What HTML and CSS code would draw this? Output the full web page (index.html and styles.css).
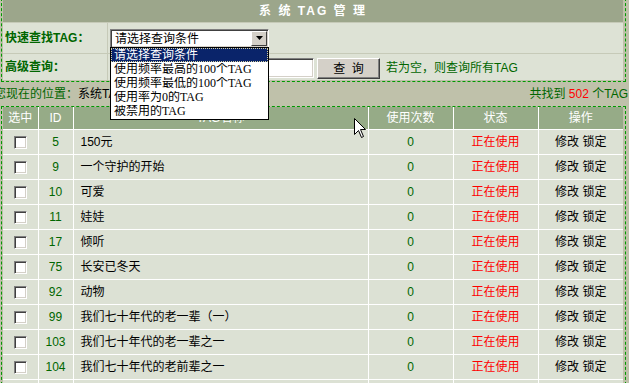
FILE: index.html
```html
<!DOCTYPE html>
<html lang="zh-CN">

<head>
    <meta charset="UTF-8">
    <title>系统TAG管理</title>
    <link rel="stylesheet" href="styles.css">
</head>

<body>
    <div class="panel search-panel">
        <div class="search">
            <div class="title">系 统 TAG 管 理</div>

            <div class="label">快速查找TAG：</div>
            <div class="field">
                <div class="select">
                    <span class="select-text">请选择查询条件</span>
                    <span class="select-btn">
                        <svg width="7" height="4" viewBox="0 0 7 4"><path d="M0 0h7L3.5 4z" fill="#000"/></svg>
                    </span>
                    <ul class="options">
                        <li class="active">请选择查询条件</li>
                        <li>使用频率最高的100个TAG</li>
                        <li>使用频率最低的100个TAG</li>
                        <li>使用率为0的TAG</li>
                        <li>被禁用的TAG</li>
                    </ul>
                </div>
            </div>

            <div class="label">高级查询：</div>
            <div class="field field-low">
                <span class="text-input"></span>
                <span class="btn">查 询</span>
                <span class="hint">若为空，则查询所有TAG</span>
            </div>
        </div>
    </div>

    <div class="location">
        <span class="here"><span class="green">您现在的位置：</span>系统TAG管理</span>
        <span class="found">共找到 <em>502</em> 个TAG</span>
    </div>

    <div class="panel list-panel">
        <table>
            <colgroup>
                <col class="c-check">
                <col class="c-id">
                <col class="c-name">
                <col class="c-num">
                <col class="c-state">
                <col class="c-op">
            </colgroup>
            <thead>
                <tr>
                    <th>选中</th>
                    <th>ID</th>
                    <th>TAG名称</th>
                    <th>使用次数</th>
                    <th>状态</th>
                    <th>操作</th>
                </tr>
            </thead>
            <tbody>
                <tr><td><span class="cb"></span></td><td class="num">5</td><td class="name">150元</td><td class="num">0</td><td class="state">正在使用</td><td>修改 锁定</td></tr>
                <tr><td><span class="cb"></span></td><td class="num">9</td><td class="name">一个守护的开始</td><td class="num">0</td><td class="state">正在使用</td><td>修改 锁定</td></tr>
                <tr><td><span class="cb"></span></td><td class="num">10</td><td class="name">可爱</td><td class="num">0</td><td class="state">正在使用</td><td>修改 锁定</td></tr>
                <tr><td><span class="cb"></span></td><td class="num">11</td><td class="name">娃娃</td><td class="num">0</td><td class="state">正在使用</td><td>修改 锁定</td></tr>
                <tr><td><span class="cb"></span></td><td class="num">17</td><td class="name">倾听</td><td class="num">0</td><td class="state">正在使用</td><td>修改 锁定</td></tr>
                <tr><td><span class="cb"></span></td><td class="num">75</td><td class="name">长安已冬天</td><td class="num">0</td><td class="state">正在使用</td><td>修改 锁定</td></tr>
                <tr><td><span class="cb"></span></td><td class="num">92</td><td class="name">动物</td><td class="num">0</td><td class="state">正在使用</td><td>修改 锁定</td></tr>
                <tr><td><span class="cb"></span></td><td class="num">99</td><td class="name">我们七十年代的老一辈（一）</td><td class="num">0</td><td class="state">正在使用</td><td>修改 锁定</td></tr>
                <tr><td><span class="cb"></span></td><td class="num">103</td><td class="name">我们七十年代的老一辈之一</td><td class="num">0</td><td class="state">正在使用</td><td>修改 锁定</td></tr>
                <tr><td><span class="cb"></span></td><td class="num">104</td><td class="name">我们七十年代的老前辈之一</td><td class="num">0</td><td class="state">正在使用</td><td>修改 锁定</td></tr>
                <tr><td></td><td></td><td></td><td></td><td></td><td></td></tr>
            </tbody>
        </table>
    </div>

    <!-- mouse pointer caught in the screenshot -->
    <svg class="cursor" width="13" height="21" viewBox="0 0 13 21">
        <path d="M0.5 0.5V16.5L4.5 12.5L7.5 19.5L9.5 18.5L6.5 11.5H11.5Z" fill="#fff" stroke="#000" stroke-width="1"/>
    </svg>
</body>

</html>
```

FILE: styles.css
```css
body {
    margin: 0;
    background: #bfc1aa;
    font-family: "Liberation Sans", "Noto Sans CJK SC", sans-serif;
    font-size: 12px;
    line-height: 14px;
    overflow: hidden;
    position: relative;
}

.panel {
    margin: 0 3px 0 1px;
    border: 1px dashed #009900;
}

.search-panel {
    margin-top: -2px;
    padding: 1px 2px 1px 1px;
}

.search {
    display: grid;
    grid-template-columns: 104px 1fr;
    grid-template-rows: 22px 30px 26px;
    gap: 1px;
    background: #c6cab8;
}

.title {
    grid-column: 1 / -1;
    background: #9ca68b;
    color: #fff;
    font-weight: bold;
    text-align: center;
    line-height: 22px;
    letter-spacing: 2px;
}

.label {
    display: flex;
    align-items: center;
    padding-left: 2px;
    background: #dde2d5;
    color: #006600;
    font-weight: bold;
}

.field {
    display: flex;
    align-items: center;
    padding-left: 2px;
    background: #dde2d5;
}

.field-low {
    padding-top: 2px;
}

.select {
    position: relative;
    width: 159px;
    height: 19px;
    box-sizing: border-box;
    display: flex;
    align-items: center;
    justify-content: space-between;
    background: #fff;
    border-top: 1px solid #808080;
    border-left: 1px solid #808080;
    border-right: 1px solid #fff;
    border-bottom: 1px solid #fff;
    box-shadow: inset 1px 1px #404040, inset -1px -1px #d4d0c8;
    z-index: 2;
}

.select-text {
    padding-left: 4px;
    font-family: "Noto Sans CJK SC", sans-serif;
}

.select-btn {
    width: 16px;
    height: 15px;
    margin-right: 1px;
    box-sizing: border-box;
    display: flex;
    align-items: center;
    justify-content: center;
    background: #d4d0c8;
    border-top: 1px solid #fff;
    border-left: 1px solid #fff;
    border-right: 1px solid #404040;
    border-bottom: 1px solid #404040;
}

.options {
    position: absolute;
    top: 100%;
    left: -1px;
    width: 159px;
    box-sizing: border-box;
    margin: 0;
    padding: 0 0 1px;
    list-style: none;
    background: #fff;
    border: 1px solid #000;
    font-family: "Liberation Serif", "Noto Sans CJK SC", serif;
    font-size: 12px;
    line-height: 12px;
}

.options li {
    height: 12px;
    padding-left: 2px;
    border: 1px solid transparent;
    overflow: hidden;
    white-space: nowrap;
}

.options .active {
    background: #0a246a;
    color: #fff;
    border: 1px dotted #d4d0a0;
}

.text-input {
    width: 204px;
    height: 20px;
    box-sizing: border-box;
    background: #fff;
    border-top: 1px solid #808080;
    border-left: 1px solid #808080;
    border-right: 1px solid #fff;
    border-bottom: 1px solid #fff;
    box-shadow: inset 1px 1px #404040, inset -1px -1px #d4d0c8;
}

.btn {
    margin-left: 3px;
    width: 63px;
    height: 21px;
    box-sizing: border-box;
    display: flex;
    align-items: center;
    justify-content: center;
    background: #d4d0c8;
    border-top: 1px solid #fff;
    border-left: 1px solid #fff;
    border-right: 1px solid #404040;
    border-bottom: 1px solid #404040;
    box-shadow: inset -1px -1px #808080;
    font-family: "Noto Sans CJK SC", sans-serif;
    word-spacing: 4px;
}

.hint {
    margin-left: 6px;
    color: #006600;
}

.location {
    height: 24px;
    padding-right: 1px;
    display: flex;
    align-items: center;
    justify-content: space-between;
    white-space: nowrap;
}

.here {
    margin-left: -6px;
    color: #000;
}

.green {
    color: #006600;
}

.found {
    color: #006600;
}

.found em {
    font-style: normal;
    color: #ff0000;
}

.list-panel {
    padding: 0 2px 0 1px;
}

table {
    width: 620px;
    table-layout: fixed;
    border-collapse: collapse;
    border-style: hidden;
}

.c-check,
.c-id {
    width: 35px;
}

.c-name {
    width: 295px;
}

.c-num,
.c-state,
.c-op {
    width: 85px;
}

th,
td {
    padding: 0;
    border: 1px solid #fff;
    text-align: center;
}

th {
    height: 22px;
    background: #96ab87;
    color: #fff;
    font-weight: normal;
}

td {
    height: 24px;
    background: #dce1d4;
    color: #000;
}

td.num {
    color: #006600;
}

td.name {
    text-align: left;
    padding-left: 7px;
}

td.state {
    color: #ff0000;
}

.cb {
    display: inline-block;
    vertical-align: middle;
    width: 13px;
    height: 13px;
    box-sizing: border-box;
    background: #fff;
    border-top: 1px solid #808080;
    border-left: 1px solid #808080;
    border-right: 1px solid #fff;
    border-bottom: 1px solid #fff;
    box-shadow: inset 1px 1px #404040, inset -1px -1px #d4d0c8;
}

.cursor {
    position: absolute;
    left: 354px;
    top: 118px;
    z-index: 3;
}
```
